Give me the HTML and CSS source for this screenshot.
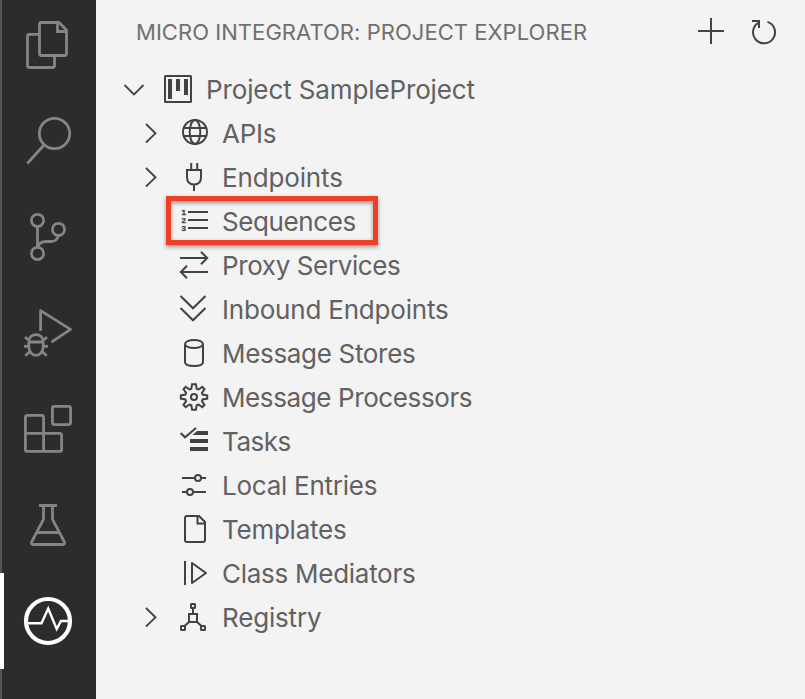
FILE: index.html
```html
<!DOCTYPE html>
<html lang="en">
<head>
<meta charset="utf-8">
<title>Micro Integrator: Project Explorer</title>
<link rel="stylesheet" href="styles.css">
</head>
<body>
<div class="window">
<nav class="activity-bar">
  <div class="activity"><svg viewBox="0 -3 96 96"><path d="M39.5 34.4H29.5a2 2 0 0 0-2 2V65.5a2 2 0 0 0 2 2H52.500a2 2 0 0 0 2-2V56"/><path d="M41.500 22.500H59L66.500 30V53.500a2 2 0 0 1-2 2H41.500a2 2 0 0 1-2-2V24.500a2 2 0 0 1 2-2ZM57.500 22.500V31.500H66.500"/></svg></div>
  <div class="activity"><svg viewBox="0 93 96 96"><circle cx="54.500" cy="133.500" r="15.200"/><path d="M44 145L27.300 163.500"/></svg></div>
  <div class="activity"><svg viewBox="0 189 96 96"><circle cx="37.500" cy="220.400" r="6.100"/><circle cx="37.500" cy="253.400" r="6.100"/><circle cx="58.500" cy="229.400" r="6.100"/><path d="M37.500 226.500V247.300M58.500 235.500C57.500 239.500 55 241.500 51 241.500H46.500C41 241.500 38.500 243.500 37.500 247.300"/></svg></div>
  <div class="activity"><svg viewBox="0 285 96 96"><path stroke-linejoin="round" d="M40.600 331V310.600L70.500 329.400L51.500 342.200"/><path d="M28.800 342V346.500C28.800 351.500 32 355.300 36 355.300S43.200 351.500 43.200 346.500V342C43.200 337.300 40 334.600 36 334.600S28.800 337.300 28.800 342ZM28.800 342H43.200M24 346.300H28.800M43.200 346.300H48M25 337L29.500 341M47 337L42.500 341M25.300 355.800L30 351.300M46.700 355.800L42 351.300"/></svg></div>
  <div class="activity"><svg viewBox="0 381 96 96"><path d="M27.400 415.400H41.600a2 2 0 0 1 2 2V433.400H59.600a2 2 0 0 1 2 2V449.400a2 2 0 0 1-2 2H27.400a2 2 0 0 1-2-2V417.400a2 2 0 0 1 2-2ZM25.400 433.400H43.600V451.400"/><rect x="52.400" y="406.400" width="18.200" height="18.200" rx="2"/></svg></div>
  <div class="activity"><svg viewBox="0 477 96 96"><path d="M39 505.500H57M43.500 505.500V519.500L31.800 541.500Q30.500 544.500 33.500 544.500H62.500Q65.500 544.500 64.200 541.500L52.500 519.500V505.500M37 532.500H59"/></svg></div>
  <div class="activity active"><svg viewBox="0 573 96 96"><circle class="ring" cx="48" cy="621" r="22"/><path class="pulse" d="M26 623.300H41.500L48.200 608.500L56.700 629L61 621H69"/></svg></div>
</nav>
<main class="explorer">
  <header class="header">
    <h1>MICRO INTEGRATOR: PROJECT EXPLORER</h1>
    <svg class="add" viewBox="696 16 30 30"><path d="M711 18V44M698 31H724"/></svg>
    <svg class="refresh" viewBox="748 16 32 32"><path d="M767.500 21.900A11 11 0 1 1 759.300 22.400M752 21H759V28"/></svg>
  </header>
  <div class="tree">
    <div class="row root"><svg class="chevron" viewBox="122 78 24 24"><path d="M124.500 85L134 94.500L143.500 85"/></svg><svg class="icon" viewBox="162 74 32 32"><rect x="165" y="76" width="26" height="26" rx=".5"/><path class="solid" d="M168 79h4v20h-4zM176 79h4v12h-4zM184 79h4v16h-4z"/></svg><span class="t0">Project SampleProject</span></div>
    <div class="row"><svg class="chevron" viewBox="138 122 24 24"><path d="M146 124L155.500 133.300L146 142.500"/></svg><svg class="icon" viewBox="178 118 32 32"><circle cx="195" cy="132" r="12"/><ellipse cx="195" cy="132" rx="5.300" ry="12"/><path d="M184 128H206M184 136H206"/></svg><span class="t1">APIs</span></div>
    <div class="row"><svg class="chevron" viewBox="138 166 24 24"><path d="M146 168L155.500 177.300L146 186.500"/></svg><svg class="icon" viewBox="178 162 32 32"><path d="M191.200 163V170M197.200 163V170M187 170H201V177Q201 184.500 194 184.500T187 177ZM194 184.500V191"/></svg><span class="t2">Endpoints</span></div>
    <div class="row selected"><i class="chevron"></i><svg class="icon" viewBox="178 206 32 32"><path d="M188 212H208M188 220H208M188 228H208"/><text x="181.500" y="215">1</text><text x="181.500" y="223">2</text><text x="181.500" y="231">3</text></svg><span class="t3">Sequences</span></div>
    <div class="row"><i class="chevron"></i><svg class="icon" viewBox="178 250 32 32"><path d="M180 258H207M201 251.700L207.200 258L201 264.300M208 272H181M187 265.700L180.800 272L187 278.300"/></svg><span class="t4">Proxy Services</span></div>
    <div class="row"><i class="chevron"></i><svg class="icon" viewBox="178 294 32 32"><path d="M180.500 296L193 308.300L205.500 296M180.500 308L193 320.300L205.500 308"/></svg><span class="t5">Inbound Endpoints</span></div>
    <div class="row"><i class="chevron"></i><svg class="icon" viewBox="178 338 32 32"><ellipse cx="194" cy="344" rx="9" ry="4"/><path d="M185 344V362C185 364.700 189 366 194 366S203 364.700 203 362V344"/></svg><span class="t6">Message Stores</span></div>
    <div class="row"><i class="chevron"></i><svg class="icon" viewBox="178 382 32 32"><path d="M192.100 384.200H195.900L196.700 388.800L198.500 389.500L202.300 386.900L204.500 389.100L201.900 392.900L202.600 394.600L207.200 395.400V398.600L202.600 399.400L201.900 401.100L204.500 404.900L202.300 407.100L198.500 404.500L196.700 405.200L195.900 409.800H192.100L191.300 405.200L189.500 404.500L185.700 407.100L183.500 404.900L186.100 401.100L185.400 399.400L180.800 398.600V395.400L185.400 394.600L186.100 392.900L183.500 389.100L185.700 386.900L189.500 389.500L191.300 388.800Z"/><circle cx="194" cy="397" r="3"/></svg><span class="t7">Message Processors</span></div>
    <div class="row"><i class="chevron"></i><svg class="icon" viewBox="178 426 32 32"><path class="solid" d="M197 431H208V435H192.500ZM190 439H208V443H190ZM190 447H208V451H190Z"/><path d="M180.700 433L185 437.300L196 428"/></svg><span class="t8">Tasks</span></div>
    <div class="row"><i class="chevron"></i><svg class="icon" viewBox="178 470 32 32"><path d="M182 478H195M201 478H206M182 492H187M193 492H206"/><circle cx="198" cy="478" r="3"/><circle cx="190" cy="492" r="3"/></svg><span class="t9">Local Entries</span></div>
    <div class="row"><i class="chevron"></i><svg class="icon" viewBox="178 514 32 32"><path d="M187 516H199L205 522V540a2 2 0 0 1-2 2H187a2 2 0 0 1-2-2V518a2 2 0 0 1 2-2ZM197.500 516V523.500H205"/></svg><span class="t10">Templates</span></div>
    <div class="row"><i class="chevron"></i><svg class="icon" viewBox="178 558 32 32"><path stroke-linejoin="round" d="M185 561V585M192 563V583L206 573Z"/></svg><span class="t11">Class Mediators</span></div>
    <div class="row"><svg class="chevron" viewBox="138 606 24 24"><path d="M146 608L155.500 617.300L146 626.500"/></svg><svg class="icon" viewBox="178 602 32 32"><path d="M189 614H197V622H189ZM193 608V614M189 622L184.500 626M197 622L201.500 626"/><rect x="191" y="604" width="4" height="4" rx=".5"/><rect x="181" y="626" width="4" height="4" rx=".5"/><rect x="201" y="626" width="4" height="4" rx=".5"/></svg><span class="t12">Registry</span></div>
  </div>
</main>
</div>
</body>
</html>
```

FILE: styles.css
```css
* { box-sizing: border-box; }
body { margin: 0; background: #f3f3f3; font-family: Inter, "Liberation Sans", sans-serif; }
svg { display: block; flex: none; fill: none; }
.window { display: flex; height: 699px; overflow: hidden; }
.activity-bar { flex: none; width: 96px; background: #2c2c2c; border-left: 2px solid #545454; }
.activity { height: 96px; margin-left: -2px; }
.activity:first-child { margin-top: -3px; }
.activity svg { width: 96px; height: 96px; stroke: #858585; stroke-width: 2.8; }
.activity.active { border-left: 4px solid #fff; }
.activity.active svg { margin-left: -4px; stroke: #fff; }
.activity .ring { stroke-width: 4.200; }
.activity .pulse { stroke-width: 2.400; }
.explorer { flex: 1; min-width: 0; }
.header { display: flex; align-items: center; height: 64px; padding: 0 25px 0 40px; color: #6f6f6f; }
.header h1 { flex: 1; margin: 0; font-size: 22px; font-weight: 400; line-height: 32px; letter-spacing: .045px; white-space: nowrap; }
.header svg { stroke: #424242; stroke-width: 2; }
.add { width: 30px; height: 30px; margin: 0 22px 2px 0; }
.refresh { width: 32px; height: 32px; }
.tree { padding-top: 4px; }
.row { position: relative; display: flex; align-items: center; height: 44px; padding-left: 42px; color: #616161; font-size: 26px; line-height: 44px; white-space: nowrap; }
.root { padding-left: 26px; }
.chevron { flex: none; width: 24px; height: 24px; margin-right: 16px; stroke: #424242; stroke-width: 1.800; }
.icon { width: 32px; height: 32px; margin-right: 12px; stroke: #424242; stroke-width: 2; }
.icon .solid { fill: #424242; stroke: none; }
.icon text { fill: #424242; stroke: #424242; stroke-width: .3; font-family: "Liberation Sans", sans-serif; font-size: 8px; font-weight: 700; }
.selected::after { content: ""; box-sizing: border-box; position: absolute; left: 70px; top: -4px; width: 212px; height: 49px; border: 5px solid #ec4126; box-shadow: 0 2px 4px rgba(0,0,0,.4), inset 0 2px 4px rgba(0,0,0,.4); }
.t0 { letter-spacing: -.12px; }
.t1 { letter-spacing: -.3px; }
.t2 { letter-spacing: -.15px; }
.t3 { letter-spacing: -.4px; }
.t4 { letter-spacing: -.38px; }
.t5 { letter-spacing: -.2px; }
.t6 { letter-spacing: -.32px; }
.t7 { letter-spacing: -.39px; }
.t8 { letter-spacing: -.5px; }
.t9 { letter-spacing: -.25px; }
.t10 { letter-spacing: -.25px; }
.t11 { letter-spacing: -.27px; }
.t12 { letter-spacing: -.18px; }
```
